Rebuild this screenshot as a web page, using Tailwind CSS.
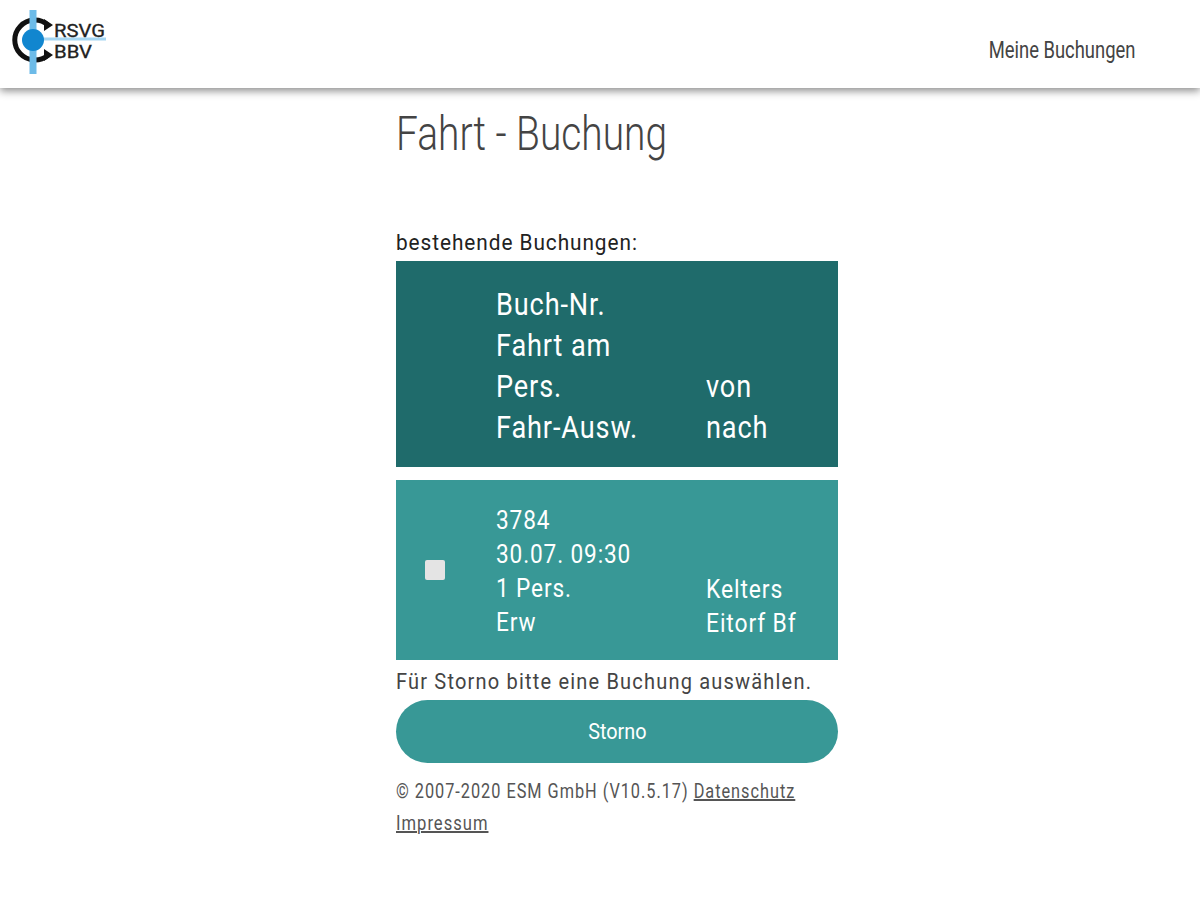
<!DOCTYPE html>
<html lang="de">

<head>
    <meta charset="UTF-8" />
    <meta name="viewport" content="width=device-width, initial-scale=1.0" />
    <title>Fahrt - Buchung</title>
    <script src="https://cdn.jsdelivr.net/npm/@tailwindcss/browser@4"></script>
</head>

<body class="bg-white font-['Roboto',sans-serif] text-[#3a3a3a] h-[900px] overflow-hidden">

    <!-- Header -->
    <header class="h-[88px] bg-white shadow-[0_3px_8px_rgba(0,0,0,0.45)] flex items-start justify-between pl-[12px] pr-[65px]">
        <svg class="mt-[10px]" width="96" height="66" viewBox="0 0 96 66" fill="none">
            <path d="M36 15 A20 20 0 1 0 36 45" stroke="#111" stroke-width="5" />
            <path d="M32 9 L41 15 L32 21 Z M32 39 L41 45 L32 51 Z" fill="#111" />
            <path d="M21 0 V64" stroke="#6dbbe8" stroke-width="7" />
            <path d="M24 29 H94" stroke="#a5d6f2" stroke-width="3" />
            <circle cx="21" cy="30" r="11" fill="#1186cf" />
            <text x="42" y="27" font-size="18" fill="#222" stroke="#222" stroke-width="0.3" textLength="51" lengthAdjust="spacingAndGlyphs">RSVG</text>
            <text x="42" y="48" font-size="18" fill="#222" stroke="#222" stroke-width="0.3" textLength="38" lengthAdjust="spacingAndGlyphs">BBV</text>
        </svg>
        <a class="mt-[37px] text-[23px] leading-[28px] text-[#444] origin-right scale-x-[0.8]">Meine Buchungen</a>
    </header>

    <main class="w-[442px] ml-[396px]">
        <h1 class="mt-[17px] text-[48px] leading-[58px] font-light text-[#444] origin-left scale-x-[0.81] whitespace-nowrap">Fahrt - Buchung</h1>

        <p class="mt-[66px] text-[22px] leading-[28px] tracking-[1px] text-[#222] origin-left scale-x-[0.945] whitespace-nowrap">bestehende Buchungen:</p>

        <!-- Kopfzeile -->
        <div class="mt-[4px] h-[206px] bg-[#1f6b6b] text-white text-[31px] leading-[41px] tracking-[1px] grid grid-cols-[100px_210px_1fr] pt-[23px]">
            <div></div>
            <div class="origin-left scale-x-[0.875] whitespace-nowrap">
                <div>Buch-Nr.</div>
                <div>Fahrt am</div>
                <div>Pers.</div>
                <div>Fahr-Ausw.</div>
            </div>
            <div class="pt-[82px] origin-left scale-x-[0.875] whitespace-nowrap">
                <div>von</div>
                <div>nach</div>
            </div>
        </div>

        <!-- Buchung -->
        <div class="mt-[13px] h-[180px] bg-[#389896] text-white text-[26px] leading-[34px] tracking-[1px] grid grid-cols-[100px_210px_1fr] pt-[23px]">
            <div class="flex items-center pl-[29px] pb-[23px]">
                <span class="block w-[20px] h-[20px] rounded-[2px] bg-[#e4e4e4]"></span>
            </div>
            <div class="origin-left scale-x-[0.87] whitespace-nowrap">
                <div>3784</div>
                <div>30.07. 09:30</div>
                <div>1 Pers.</div>
                <div>Erw</div>
            </div>
            <div class="pt-[69px] origin-left scale-x-[0.88] whitespace-nowrap">
                <div>Kelters</div>
                <div>Eitorf Bf</div>
            </div>
        </div>

        <p class="mt-[7px] text-[22px] leading-[30px] tracking-[1.3px] text-[#444] origin-left scale-x-[0.91] whitespace-nowrap">Für Storno bitte eine Buchung auswählen.</p>

        <button class="mt-[3px] block w-full h-[63px] rounded-[32px] bg-[#389896] text-white text-[22px]"><span class="inline-block scale-x-[0.9]">Storno</span></button>

        <div class="mt-[12px] text-[20px] leading-[32px] tracking-[1.2px] text-[#555] whitespace-nowrap">
            <p class="origin-left scale-x-[0.815]">© 2007-2020 ESM GmbH (V10.5.17) <a class="underline">Datenschutz</a></p>
            <p class="origin-left scale-x-[0.83]"><a class="underline">Impressum</a></p>
        </div>
    </main>

</body>

</html>
